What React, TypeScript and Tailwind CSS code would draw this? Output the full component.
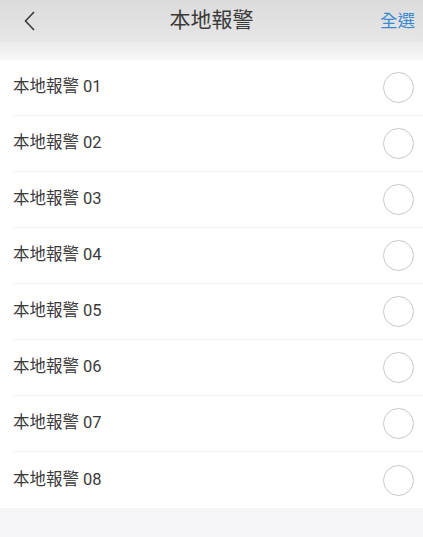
import React, { useState } from 'react';

const alarms = ['01', '02', '03', '04', '05', '06', '07', '08'];

const font = { fontFamily: '"Roboto", "Noto Sans CJK TC", sans-serif' };

const App: React.FC = () => {
    const [selected, setSelected] = useState<string[]>([]);

    const toggle = (id: string) =>
        setSelected(s => (s.includes(id) ? s.filter(x => x !== id) : [...s, id]));

    return (
        <div className="min-h-[537px] w-full bg-[#f5f5f7]" style={font}>
            <div className="bg-gradient-to-b from-[#dcdcdc] to-[#e6e6e6] h-[42px] flex items-center px-[24px] relative">
                <svg width="12" height="20" viewBox="0 0 12 20" className="shrink-0">
                    <path d="M10 1 L1.5 10 L10 19" fill="none" stroke="#3a3a3a" strokeWidth="1.6" />
                </svg>
                <div className="absolute left-0 right-0 text-center text-[21px] text-[#3a3a3a] pointer-events-none">本地報警</div>
                <button className="ml-auto text-[17.5px] text-[#3a8ad2] mr-[-16px]" onClick={() => setSelected(selected.length === alarms.length ? [] : alarms)}>
                    全選
                </button>
            </div>
            <div className="h-[18px] bg-gradient-to-b from-[#ebebeb] to-[#f7f7f7]" />
            <div className="bg-white">
                {alarms.map((id, i) => (
                    <div key={id} className="pl-[13px]" onClick={() => toggle(id)}>
                        <div className={`h-[56px] flex items-center pr-[9px] ${i < alarms.length - 1 ? 'border-b border-[#f0f0f0]' : ''}`}>
                            <span className="text-[16.5px] text-[#3a3a3a]">本地報警 {id}</span>
                            <span
                                className={`ml-auto w-[31px] h-[31px] rounded-full border-[1.5px] ${
                                    selected.includes(id) ? 'border-[#3a8ad2] bg-[#3a8ad2]' : 'border-[#c8c8c8]'
                                }`}
                            />
                        </div>
                    </div>
                ))}
            </div>
        </div>
    );
};

export default App;
